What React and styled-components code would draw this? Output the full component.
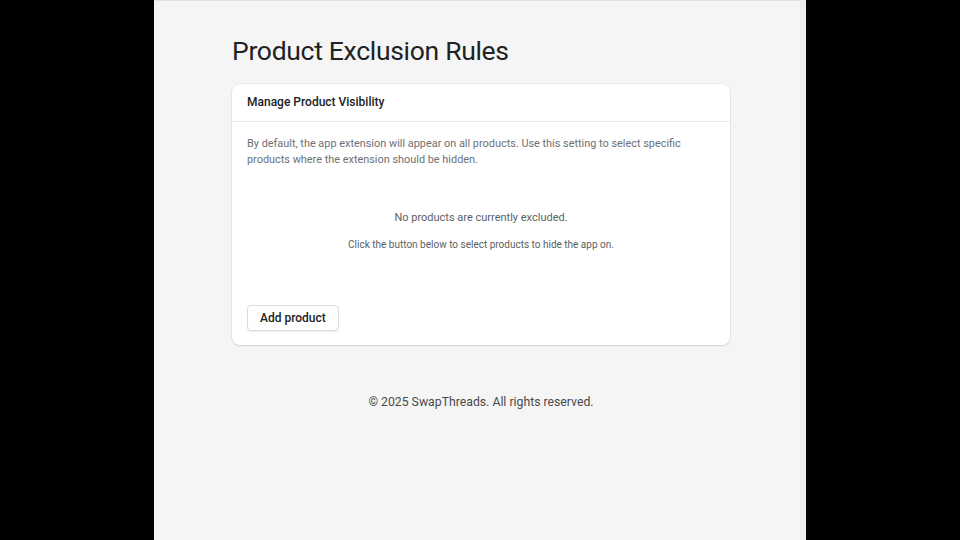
import React from 'react'
import styled, { createGlobalStyle } from 'styled-components'

const GlobalStyle = createGlobalStyle`
  html, body {
    margin: 0;
    padding: 0;
    background: #000;
    font-family: Roboto, Inter, "Liberation Sans", sans-serif;
  }
`

const Stage = styled.div`
  width: 960px;
  height: 540px;
  display: flex;
  justify-content: center;
  background: #000;
  overflow: hidden;
`

const Page = styled.div`
  width: 652px;
  height: 540px;
  box-sizing: border-box;
  background: #f5f5f5;
  border-top: 1px solid #e3e3e3;
  border-right: 6px solid #ececec;
  display: flex;
  flex-direction: column;
  padding: 34px 70px 0 78px;
`

const Title = styled.h1`
  margin: 0 0 17px;
  font-size: 26.5px;
  font-weight: 400;
  color: #202223;
  letter-spacing: -0.3px;
  line-height: 32px;
`

const Card = styled.section`
  width: 498px;
  background: #fff;
  border-radius: 8px;
  box-shadow: 0 1px 2px rgba(0, 0, 0, 0.12), 0 0 0 1px rgba(0, 0, 0, 0.03);
`

const CardHeader = styled.div`
  padding: 11px 15px 11px;
  border-bottom: 1px solid #ececec;
  font-size: 12px;
  font-weight: 500;
  color: #202223;
  line-height: 15px;
`

const CardBody = styled.div`
  padding: 14px 15px 14px;
`

const Description = styled.p`
  margin: 0;
  font-size: 10.9px;
  line-height: 16px;
  color: #6d7175;
`

const Empty = styled.div`
  display: flex;
  flex-direction: column;
  align-items: center;
  padding: 42px 0 53px;
  gap: 12px;
`

const EmptyText = styled.p`
  margin: 0;
  font-size: ${p => (p.small ? '10px' : '11px')};
  line-height: 15px;
  color: #5c5f62;
`

const Button = styled.button`
  font-family: inherit;
  font-size: 12px;
  font-weight: 500;
  color: #202223;
  background: #fff;
  border: 1px solid #dcdcdc;
  border-radius: 4px;
  height: 26px;
  padding: 0 12px;
  box-shadow: 0 1px 0 rgba(0, 0, 0, 0.05);
  cursor: pointer;
`

const Footer = styled.footer`
  margin-top: 50px;
  width: 498px;
  text-align: center;
  font-size: 12.25px;
  color: #4a4a4a;
`

export default function App() {
  return (
    <Stage>
      <GlobalStyle />
      <Page>
        <Title>Product Exclusion Rules</Title>
        <Card>
          <CardHeader>Manage Product Visibility</CardHeader>
          <CardBody>
            <Description>
              By default, the app extension will appear on all products. Use this setting to select specific
              products where the extension should be hidden.
            </Description>
            <Empty>
              <EmptyText>No products are currently excluded.</EmptyText>
              <EmptyText small>Click the button below to select products to hide the app on.</EmptyText>
            </Empty>
            <Button>Add product</Button>
          </CardBody>
        </Card>
        <Footer>© 2025 SwapThreads. All rights reserved.</Footer>
      </Page>
    </Stage>
  )
}
